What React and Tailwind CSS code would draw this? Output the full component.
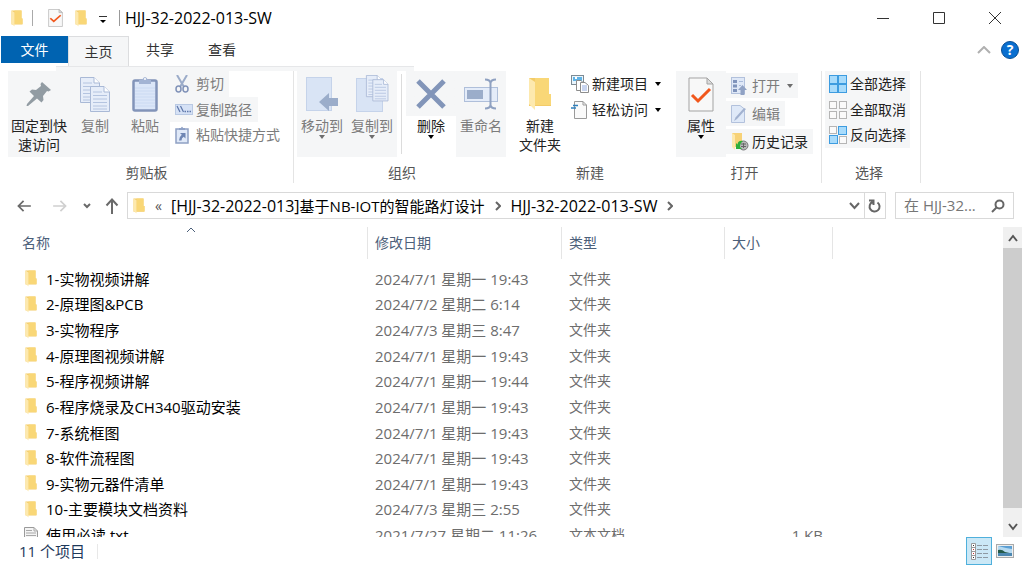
import React from "react";

const files = [
  ["1-实物视频讲解", "2024/7/1 星期一 19:43", "文件夹", ""],
  ["2-原理图&PCB", "2024/7/2 星期二 6:14", "文件夹", ""],
  ["3-实物程序", "2024/7/3 星期三 8:47", "文件夹", ""],
  ["4-原理图视频讲解", "2024/7/1 星期一 19:43", "文件夹", ""],
  ["5-程序视频讲解", "2024/7/1 星期一 19:44", "文件夹", ""],
  ["6-程序烧录及CH340驱动安装", "2024/7/1 星期一 19:43", "文件夹", ""],
  ["7-系统框图", "2024/7/1 星期一 19:43", "文件夹", ""],
  ["8-软件流程图", "2024/7/1 星期一 19:43", "文件夹", ""],
  ["9-实物元器件清单", "2024/7/1 星期一 19:43", "文件夹", ""],
  ["10-主要模块文档资料", "2024/7/3 星期三 2:55", "文件夹", ""],
  ["使用必读.txt", "2021/7/27 星期二 11:26", "文本文档", "1 KB"],
];

/* ---------- icons ---------- */

function Folder({ className }) {
  return (
    <svg viewBox="0 0 24 34" preserveAspectRatio="none" className={className} aria-hidden="true">
      <path d="M1 1H21V17H23V29H1Z" fill="#f3cb68" />
      <path d="M7 1H21V17H23V28H7Z" fill="#f9d777" />
      <path d="M1 1L7 5V33L1 27Z" fill="#fde9ae" />
    </svg>
  );
}

function CheckPage({ className }) {
  return (
    <svg viewBox="0 0 26 35" className={className} preserveAspectRatio="none" aria-hidden="true">
      <path d="M1 1H19L25 7V34H1Z" fill="#f8f8f8" stroke="#a3a3a3" />
      <path d="M19 1V7H25Z" fill="#dcdcdc" stroke="#a3a3a3" />
      <path d="M4 18L10 24L22 12" fill="none" stroke="#f1571c" strokeWidth="3" />
    </svg>
  );
}

function TextPage() {
  return (
    <svg viewBox="0 0 14 16" className="h-4 w-[14px]" aria-hidden="true">
      <path d="M.5 .5H10L13.5 4V15.5H.5Z" fill="#f4f4f4" stroke="#9a9a9a" />
      <path d="M10 .5V4H13.5M2 3.5H8M2 6H12M2 8.500H12M2 11H12M2 13H12" fill="none" stroke="#a8a8a8" />
    </svg>
  );
}

function Pin() {
  return (
    <svg viewBox="0 0 26 26" className="h-[26px] w-[26px]" aria-hidden="true">
      <path d="M16 1L25 9L22.500 10.500L21 10L17 15L17.500 19L15.500 21.500L11 17.500L2 25H0.500L1 23L8 15L3.500 10.500L6 8.500L10 9L15 5L14.500 3Z" fill="#929ca3" />
    </svg>
  );
}

function Pages({ x = 0, y = 0 }) {
  return (
    <g transform={`translate(${x} ${y})`}>
      <path d="M.5 .5H14L19.500 6V25.500H.5Z" fill="#e6edf9" stroke="#a9b9d6" />
      <path d="M14 .5V6H19.500" fill="#fff" stroke="#a9b9d6" />
      <path d="M3 6H12M3 9.500H17M3 13H17M3 16.500H17M3 20H17M3 23H17" stroke="#b4c4e0" />
    </g>
  );
}

function Copy() {
  return (
    <svg viewBox="0 0 30 35" className="h-[35px] w-[30px]" aria-hidden="true">
      <Pages />
      <Pages x={10} y={9} />
    </svg>
  );
}

function Paste() {
  return (
    <svg viewBox="0 0 26 36" className="h-9 w-[26px]" aria-hidden="true">
      <rect x="1.500" y="4.500" width="23" height="30" rx="1.500" fill="#dbe6f8" stroke="#8294b9" strokeWidth="2.500" />
      <path d="M3 12H23M3 15H23M3 18H23M3 21H23M3 24H23M3 27H23M3 30H23" stroke="#cbdaf2" />
      <path d="M7 8V4H10Q13 -2 16 4H19V8Z" fill="#a3b4d4" />
      <circle cx="13" cy="3" r="1" fill="#fff" />
    </svg>
  );
}

function Scissors() {
  return (
    <svg viewBox="0 0 14 18" className="h-[18px] w-[14px]" fill="none" aria-hidden="true">
      <path d="M2 0L9 12M12 0L5 12" stroke="#9cacc9" strokeWidth="2" />
      <ellipse cx="3.500" cy="14" rx="2.500" ry="3" stroke="#8092b8" strokeWidth="1.500" />
      <ellipse cx="10.500" cy="14" rx="2.500" ry="3" stroke="#8092b8" strokeWidth="1.500" />
    </svg>
  );
}

function CopyPath() {
  return (
    <svg viewBox="0 0 18 11" className="h-[11px] w-[18px]" aria-hidden="true">
      <rect x=".5" y=".5" width="17" height="10" fill="#d5e1f5" stroke="#b9c9e3" />
      <path d="M2 2L5 8M5.500 2L8.500 8" stroke="#5f78ab" strokeWidth="1.200" />
      <path d="M9.500 7.500H11M12 7.500H13.500M14.500 7.500H16" stroke="#5f78ab" strokeWidth="1.500" />
    </svg>
  );
}

function PasteShortcut() {
  return (
    <svg viewBox="0 0 14 18" className="h-[18px] w-[14px]" aria-hidden="true">
      <rect x="1" y="3" width="12" height="14" fill="#e0e9f8" stroke="#8fa0c3" strokeWidth="1.500" />
      <path d="M4 4V2H6Q7 -.5 8 2H10V4Z" fill="#8ea1c6" />
      <path d="M5 7H10.500V12.500L8.700 10.700Q6.500 12 6.500 14.500H4Q4 11 6.800 8.800Z" fill="#6f86b3" />
    </svg>
  );
}

function MoveTo() {
  return (
    <svg viewBox="0 0 34 36" className="h-9 w-[34px]" aria-hidden="true">
      <rect x="1.500" y="1.500" width="25" height="33" fill="#d9e4f5" stroke="#c5d3ea" />
      <path d="M14 26L24 17V22H33V30H24V35Z" fill="#9badca" />
    </svg>
  );
}

function CopyTo() {
  return (
    <svg viewBox="0 0 34 38" className="h-[38px] w-[34px]" aria-hidden="true">
      <rect x="1.500" y="3.500" width="26" height="33" fill="#d9e4f5" stroke="#c5d3ea" />
      <g transform="translate(11 0) scale(.8 .85)"><Pages /><Pages x={8} y={5} /></g>
    </svg>
  );
}

function Delete() {
  return (
    <svg viewBox="0 0 32 32" className="h-8 w-8" aria-hidden="true">
      <path d="M3 3L29 29M29 3L3 29" stroke="#8295b9" strokeWidth="5" />
    </svg>
  );
}

function Rename() {
  return (
    <svg viewBox="0 0 34 32" className="h-8 w-[34px]" fill="none" aria-hidden="true">
      <rect x=".5" y="9.500" width="33" height="14" fill="#e4ecf9" stroke="#afbfda" />
      <rect x="3" y="12" width="16" height="9" fill="#9badca" />
      <path d="M21 1.500Q26 1.500 26.500 5Q27 1.500 32 1.500M26.500 5V27M21 30.500Q26 30.500 26.500 27Q27 30.500 32 30.500" stroke="#8fa1c1" strokeWidth="2" />
    </svg>
  );
}

function NewItem() {
  return (
    <svg viewBox="0 0 18 18" className="h-[18px] w-[18px]" aria-hidden="true">
      <rect x=".5" y=".5" width="12" height="9" fill="#e9f5fd" stroke="#7d8b94" />
      <path d="M2 2H11V6H2Z" fill="#5fb3e6" />
      <path d="M4 2H6V4H4Z" fill="#fff" />
      <path d="M5.500 5.500H10L12.500 8V15.500H5.500Z" fill="#fff" stroke="#8d8d8d" />
      <path d="M9.500 7.500H14L17.500 10.500V17.500H9.500Z" fill="#fff" stroke="#8d8d8d" />
      <path d="M11 11H16M11 13H16M11 15H16" stroke="#93abe0" />
    </svg>
  );
}

function EasyAccess() {
  return (
    <svg viewBox="0 0 18 18" className="h-[18px] w-[18px]" aria-hidden="true">
      <path d="M3.500 .5H12L15.500 4V17.500H3.500Z" fill="#fafafa" stroke="#9a9a9a" />
      <path d="M12 .5V4H15.500" fill="none" stroke="#9a9a9a" />
      <path d="M2 4.500H7M0 7H5" stroke="#2f80bd" strokeWidth="1.500" />
    </svg>
  );
}

function OpenIcon() {
  return (
    <svg viewBox="0 0 16 18" className="h-[18px] w-4" aria-hidden="true">
      <rect x=".5" y=".5" width="13" height="16" fill="#dfe8f7" stroke="#b2c1dc" />
      <path d="M2 3H6V6H2ZM2 7.500H6V10.500H2ZM2 12H6V15H2Z" fill="#7f93bb" />
      <path d="M8 4.500H12M8 8.500H10" stroke="#aabbdb" />
      <path d="M11.500 8L16 13H13.500V18H9.500V13H7Z" fill="#90a2c4" />
    </svg>
  );
}

function EditIcon() {
  return (
    <svg viewBox="0 0 16 18" className="h-[18px] w-4" aria-hidden="true">
      <path d="M.5 .5H9L13.500 4V17.500H.5Z" fill="#dfe9f8" stroke="#b2c1dc" />
      <path d="M15 4L6 14L3 16L4.500 12.500L13 3Z" fill="#a2b2d0" />
    </svg>
  );
}

function HistoryIcon() {
  return (
    <svg viewBox="0 0 18 18" className="h-[18px] w-[18px]" aria-hidden="true">
      <path d="M1 0H11V14H1Z" fill="#f7d277" />
      <path d="M1 0L4 2V17L1 14Z" fill="#fde9ae" />
      <circle cx="12.500" cy="12.500" r="4.500" fill="#b9b9b9" stroke="#777" />
      <path d="M10 11H15M10 13.500H15M12.500 10V15" stroke="#666" />
      <path d="M5 10V16H11L9 14Q9 10 12 8Q7 7 6.500 11.500Z" fill="#2fae3a" />
    </svg>
  );
}

function Tiles({ on }) {
  const spots = [[0, 0], [10, 0], [0, 10], [10, 10]];
  if (on.every(Boolean)) {
    return (
      <svg viewBox="0 0 18 18" className="h-[18px] w-[18px] shrink-0" aria-hidden="true">
        <rect x=".5" y=".5" width="17" height="17" fill="#a8dbfb" stroke="#3d9ce0" />
        <path d="M9 0V18M0 9H18" stroke="#3d9ce0" strokeWidth="2" />
      </svg>
    );
  }
  return (
    <svg viewBox="0 0 18 18" className="h-[18px] w-[18px] shrink-0" aria-hidden="true">
      {spots.map(([x, y], i) => (
        <rect
          key={i}
          x={on[i] && x === 10 ? 9.5 : x + 0.5}
          y={on[i] && y === 10 ? 9.5 : y + 0.5}
          width={on[i] ? 8 : 7}
          height={on[i] ? 8 : 7}
          fill={on[i] ? "#a8dbfb" : "#fafafa"}
          stroke={on[i] ? "#3d9ce0" : "#b5b5b5"}
        />
      ))}
    </svg>
  );
}

function Caret({ className = "text-black" }) {
  return (
    <svg viewBox="0 0 6 4" className={"h-1 w-[6px] shrink-0 " + className} aria-hidden="true">
      <path d="M0 0H6L3 4Z" fill="currentColor" />
    </svg>
  );
}

function Line({ d, box = "0 0 16 16", className, width = 2 }) {
  return (
    <svg viewBox={box} className={className} fill="none" stroke="currentColor" strokeWidth={width} aria-hidden="true">
      <path d={d} />
    </svg>
  );
}

/* ---------- ribbon pieces ---------- */

function BigButton({ icon, lines, caret, muted, className = "w-[50px] bg-[#f5f6f7]" }) {
  return (
    <button type="button" className={"flex h-[86px] flex-col items-center whitespace-nowrap pt-1 " + className + (muted ? " text-[#7c7c7c]" : " text-[#222]")}>
      <span className="flex h-[38px] items-center justify-center">{icon}</span>
      <span className="mt-[3px] flex flex-col leading-[19px]">
        {lines.map((line) => (
          <span key={line}>{line}</span>
        ))}
      </span>
      {caret && <Caret className={muted ? "text-[#6d6d6d]" : "text-black"} />}
    </button>
  );
}

function SmallButton({ icon, label, caret, muted, className = "" }) {
  return (
    <button type="button" className={"flex items-center whitespace-nowrap " + className + (muted ? " text-[#7c7c7c]" : " text-[#222]")}>
      <span className="flex w-[21px] shrink-0 items-center">{icon}</span>
      {label}
      {caret && <span className="pl-[7px]"><Caret className={muted ? "text-[#6d6d6d]" : "text-black"} /></span>}
    </button>
  );
}

function Group({ label, children, className }) {
  return (
    <section aria-label={label} className={"flex shrink-0 flex-col " + className}>
      <div className="flex h-[92px] items-start">{children}</div>
      <div className="text-center leading-5 text-[#555]">{label}</div>
    </section>
  );
}

function TitleBar() {
  return (
    <header className="flex h-9 shrink-0 items-center">
      <div className="flex min-w-0 flex-1 items-center pl-[11px]">
        <Folder className="h-[17px] w-3" />
        <span className="ml-[9px] h-4 w-px bg-[#aaa]" />
        <button type="button" aria-label="属性" className="ml-[15px]"><CheckPage className="h-[18px] w-[15px]" /></button>
        <button type="button" aria-label="新建文件夹" className="ml-3"><Folder className="h-[17px] w-3" /></button>
        <button type="button" aria-label="自定义快速访问工具栏" className="ml-3 mt-1">
          <svg viewBox="0 0 8 8" className="h-2 w-2" aria-hidden="true"><path d="M0 .5H8" stroke="#333" /><path d="M1 4H7L4 7Z" /></svg>
        </button>
        <span className="ml-3 h-4 w-px bg-[#999]" />
        <h1 className="ml-[5px] truncate text-base text-black">HJJ-32-2022-013-SW</h1>
      </div>
      <div className="flex h-full shrink-0 pr-px text-[#333]">
        <button type="button" aria-label="最小化" className="flex w-14 items-center justify-center"><Line d="M0 6.500H12" box="0 0 12 12" width={1} className="h-3 w-3" /></button>
        <button type="button" aria-label="最大化" className="flex w-14 items-center justify-center"><Line d="M.5 .5H11.500V11.500H.5Z" box="0 0 12 12" width={1} className="h-3 w-3" /></button>
        <button type="button" aria-label="关闭" className="flex w-14 items-center justify-center"><Line d="M0 0L12 12M12 0L0 12" box="0 0 12 12" width={1} className="h-3 w-3" /></button>
      </div>
    </header>
  );
}

function Tabs() {
  return (
    <nav className="flex h-[30px] shrink-0 items-start pl-px text-[#333]">
      <button type="button" className="h-[27px] w-[67px] bg-[#0063b1] text-white">文件</button>
      <button type="button" className="h-[30px] w-[61px] border border-b-0 border-[#dcdddf] bg-[#f5f6f7]">主页</button>
      <button type="button" className="h-7 w-[62px]">共享</button>
      <button type="button" className="h-7 w-[62px]">查看</button>
      <div className="ml-auto flex h-7 items-center gap-[10px] pr-[5px]">
        <button type="button" aria-label="最小化功能区" className="text-[#b0b0b0]"><Line d="M1 7L7 1L13 7" box="0 0 14 8" className="h-2 w-[14px]" /></button>
        <button type="button" aria-label="帮助" className="h-[18px] w-[18px] rounded-full border border-[#0a4f94] bg-[#0a6fd0] text-sm leading-4 font-bold text-white">?</button>
      </div>
    </nav>
  );
}

function Ribbon() {
  return (
    <div className="shrink-0">
      <div className="ml-14 h-[5px] w-[358px] border-t border-[#e6e7e9] bg-[#f5f6f7]" />
      <div className="flex">
        <Group label="剪贴板" className="w-[294px] border-r border-[#e4e4e4]">
          <BigButton icon={<Pin />} lines={["固定到快", "速访问"]} className="ml-2 w-[62px] bg-[#f5f6f7]" />
          <BigButton icon={<Copy />} lines={["复制"]} muted />
          <BigButton icon={<Paste />} lines={["粘贴"]} muted />
          <div className="flex flex-col items-start">
            <SmallButton icon={<Scissors />} label="剪切" muted className="h-[26px] w-[59px] bg-[#f5f6f7] pl-[5px]" />
            <SmallButton icon={<CopyPath />} label="复制路径" muted className="h-[25px] w-[88px] bg-[#f5f6f7] pl-[5px]" />
            <SmallButton icon={<PasteShortcut />} label="粘贴快捷方式" muted className="h-[26px] pl-[5px]" />
          </div>
        </Group>
        <Group label="组织" className="w-[213px] pl-[3px]">
          <BigButton icon={<MoveTo />} lines={["移动到"]} caret muted />
          <BigButton icon={<CopyTo />} lines={["复制到"]} caret muted />
          <span className="mx-1 mt-[3px] h-20 w-px bg-[#dcdcdc]" />
          <BigButton icon={<Delete />} lines={["删除"]} caret className="w-[50px] bg-linear-to-b from-[#f5f6f7] from-[45px] to-transparent to-[45px]" />
          <BigButton icon={<Rename />} lines={["重命名"]} muted />
        </Group>
        <Group label="新建" className="w-[166px] px-2">
          <BigButton icon={<Folder className="h-[34px] w-6" />} lines={["新建", "文件夹"]} className="w-[50px] items-center text-center" />
          <div className="flex flex-col items-start pl-[6px]">
            <SmallButton icon={<NewItem />} label="新建项目" caret className="h-[26px]" />
            <SmallButton icon={<EasyAccess />} label="轻松访问" caret className="h-[26px]" />
          </div>
        </Group>
        <Group label="打开" className="w-[149px] border-r border-[#e4e4e4] pr-2 pl-[3px]">
          <BigButton icon={<CheckPage className="h-[35px] w-[26px]" />} lines={["属性"]} caret />
          <div className="flex flex-col items-start gap-[3px] pt-[2px]">
            <SmallButton icon={<OpenIcon />} label="打开" caret muted className="h-[25px] bg-[#f5f6f7] px-[5px]" />
            <SmallButton icon={<EditIcon />} label="编辑" muted className="h-[25px] bg-[#f5f6f7] px-[5px]" />
            <SmallButton icon={<HistoryIcon />} label="历史记录" className="h-[25px] bg-[#f5f6f7] px-[5px]" />
          </div>
        </Group>
        <Group label="选择" className="w-[99px] border-r border-[#e4e4e4] pr-[7px] pl-[3px]">
          <div className="flex flex-col bg-[#f5f6f7] pr-1 pl-1">
            <SmallButton icon={<Tiles on={[1, 1, 1, 1]} />} label="全部选择" className="h-[26px]" />
            <SmallButton icon={<Tiles on={[0, 0, 0, 0]} />} label="全部取消" className="h-[25px]" />
            <SmallButton icon={<Tiles on={[0, 1, 1, 0]} />} label="反向选择" className="h-[26px]" />
          </div>
        </Group>
      </div>
    </div>
  );
}

function AddressBar() {
  return (
    <div className="mt-[9px] flex h-[27px] shrink-0 items-center pr-[10px] text-base text-[#6a6a6a]">
      <button type="button" aria-label="后退" className="ml-4"><Line d="M16 7H2M7.500 1L1.500 7L7.500 13" box="0 0 16 14" className="h-3 w-4" /></button>
      <button type="button" aria-label="前进" className="ml-5 text-[#d0d0d0]"><Line d="M0 7H14M8.500 1L14.500 7L8.500 13" box="0 0 16 14" className="h-3 w-4" /></button>
      <button type="button" aria-label="最近浏览的位置" className="ml-[15px]"><Line d="M1 1L4 4L7 1" box="0 0 8 6" className="h-[6px] w-2" /></button>
      <button type="button" aria-label="上移" className="ml-[14px]"><Line d="M7 16V2M1.500 7.500L7 1.500L12.500 7.500" box="0 0 14 16" className="h-4 w-[14px]" /></button>
      <div className="ml-2 flex h-full min-w-0 flex-1 items-center border border-[#d9d9d9] text-black">
        <Folder className="ml-[5px] h-4 w-3 shrink-0" />
        <span className="ml-[10px] text-sm text-[#555]">«</span>
        <button type="button" className="ml-[9px] truncate">[HJJ-32-2022-013]<span className="text-[15px]">基于NB-IOT的智能路灯设计</span></button>
        <Line d="M1 1L5 5L1 9" box="0 0 6 10" className="ml-[10px] h-[10px] w-[6px] shrink-0 text-[#666]" />
        <button type="button" className="ml-[10px] whitespace-nowrap">HJJ-32-2022-013-SW</button>
        <Line d="M1 1L5 5L1 9" box="0 0 6 10" className="ml-[10px] h-[10px] w-[6px] shrink-0 text-[#666]" />
        <button type="button" aria-label="以前的位置" className="mr-1 ml-auto text-[#666]"><Line d="M1 1L5.500 6L10 1" box="0 0 11 8" className="h-2 w-[11px]" /></button>
        <button type="button" aria-label="刷新" className="flex h-full w-[21px] items-center justify-center border-l border-[#d9d9d9] text-[#666]">
          <Line d="M9.500 3.500A5 5 0 1 1 4.500 3M1 1.500H5.500V6" box="0 0 14 14" className="h-[14px] w-[14px]" />
        </button>
      </div>
      <div className="ml-[9px] flex h-full w-[119px] shrink-0 items-center border border-[#d9d9d9] pr-2 pl-2">
        <input type="text" aria-label="搜索" placeholder="在 HJJ-32..." className="min-w-0 flex-1 text-[15px] outline-none placeholder:text-[#767676]" />
        <svg viewBox="0 0 14 14" className="h-[14px] w-[14px] shrink-0" fill="none" stroke="#666" strokeWidth="2" aria-hidden="true"><circle cx="8.500" cy="5.500" r="4" /><path d="M5.500 8.500L1 13" /></svg>
      </div>
    </div>
  );
}

function FileList() {
  const head = "border-r border-[#e5e5e5] p-0 text-left font-normal";
  return (
    <main className="mt-2 flex min-h-0 flex-1 pr-[2px]">
      <div className="min-w-0 flex-1 overflow-hidden">
        <table className="w-full table-fixed border-separate border-spacing-0">
          <thead>
            <tr className="h-8 text-[#4c607a]">
              <th className={"relative w-[368px] " + head}>
                <button type="button" className="pl-[22px]">名称</button>
                <Line d="M1 5L5 1L9 5" box="0 0 10 6" width={1} className="absolute top-0 left-[186px] h-[6px] w-[10px]" />
              </th>
              <th className={"w-[194px] " + head}><button type="button" className="pl-[7px]">修改日期</button></th>
              <th className={"w-[163px] " + head}><button type="button" className="pl-[7px]">类型</button></th>
              <th className={"w-[108px] " + head}><button type="button" className="pl-[7px]">大小</button></th>
              <td />
            </tr>
          </thead>
        </table>
        <table className="mt-[7px] h-[282px] w-full table-fixed border-separate border-spacing-0">
          <colgroup>
            <col className="w-[368px]" />
            <col className="w-[194px]" />
            <col className="w-[163px]" />
            <col className="w-[108px]" />
            <col />
          </colgroup>
          <tbody className="text-[15px] leading-5 text-[#6d6d6d]">
            {files.map(([name, date, type, size]) => (
              <tr key={name}>
                <td className="p-0 text-black">
                  <div className="flex items-center pl-6">
                    <span className="flex w-[22px] items-center">
                      {size ? <TextPage /> : <Folder className="ml-px h-[17px] w-3" />}
                    </span>
                    {name}
                  </div>
                </td>
                <td className="p-0 pl-[7px]">{date}</td>
                <td className="p-0 pl-[7px] text-sm">{type}</td>
                <td className="p-0 pr-[10px] text-right">{size}</td>
                <td className="p-0" />
              </tr>
            ))}
          </tbody>
        </table>
      </div>
      <div className="flex w-[19px] shrink-0 flex-col bg-[#f0f0f0] text-[#555]">
        <button type="button" aria-label="向上滚动" className="flex h-[21px] items-center justify-center"><Line d="M1 7L5 2L9 7" box="0 0 10 8" className="h-2 w-[10px]" /></button>
        <div className="flex-1 bg-[#cdcdcd]" />
        <button type="button" aria-label="向下滚动" className="mt-2 flex h-[21px] items-center justify-center"><Line d="M1 1L5 6L9 1" box="0 0 10 8" className="h-2 w-[10px]" /></button>
      </div>
    </main>
  );
}

function StatusBar() {
  return (
    <footer className="flex h-[29px] shrink-0 items-center pr-[10px] pl-[19px] text-[15px] text-[#1e395b]">
      <span>11 个项目</span>
      <span className="ml-3 h-[15px] w-px bg-[#e8e8e8]" />
      <div className="ml-auto flex h-full items-start gap-1">
        <button type="button" aria-label="详细信息" className="flex h-7 w-[26px] items-center justify-center border border-[#4fb0dc] bg-[#cbe8f6]">
          <svg viewBox="0 0 17 17" className="h-[17px] w-[17px]" aria-hidden="true">
            <path d="M.5 .5H4.500V16.500H.5ZM.5 4.500H4.500M.5 8.500H4.500M.5 12.500H4.500" fill="#fff" stroke="#999" />
            <path d="M6 2.500H11M12 2.500H17M6 6.500H11M12 6.500H17M6 10.500H11M12 10.500H17M6 14.500H11M12 14.500H17" stroke="#8e9aa3" />
            <path d="M2 2H3V3H2ZM2 14H3V15H2Z" fill="#333" />
            <path d="M2 6H3V7H2ZM2 10H3V11H2Z" fill="#c33" />
          </svg>
        </button>
        <button type="button" aria-label="大缩略图" className="flex h-7 items-center">
          <svg viewBox="0 0 18 14" className="h-[14px] w-[18px]" aria-hidden="true">
            <rect x=".5" y=".5" width="17" height="13" fill="#eee" stroke="#aaa" />
            <path d="M2 2H16V12H2Z" fill="#b5d9f0" />
            <path d="M2 2H16V5L10 4Z" fill="#5b9fd4" />
            <path d="M2 6Q6 5 9 8L16 9.500H2Z" fill="#245a4a" />
            <path d="M2 9H16V12H2Z" fill="#4c87b0" />
          </svg>
        </button>
      </div>
    </footer>
  );
}

export default function App() {
  return (
    <div className="flex h-screen flex-col overflow-hidden bg-white font-['Open_Sans','Noto_Sans_CJK_SC',sans-serif] text-sm">
      <TitleBar />
      <Tabs />
      <Ribbon />
      <AddressBar />
      <FileList />
      <StatusBar />
    </div>
  );
}
